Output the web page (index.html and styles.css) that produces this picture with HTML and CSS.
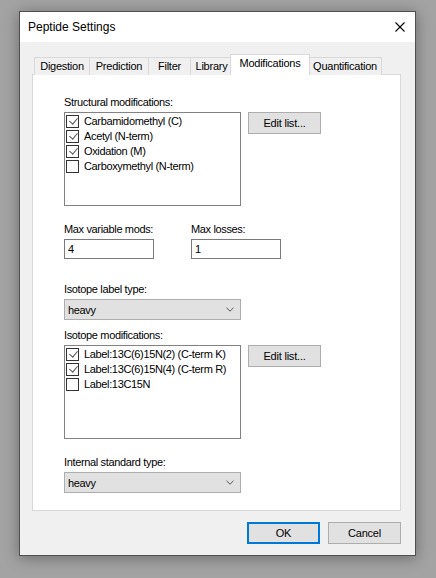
FILE: index.html
```html
<!DOCTYPE html>
<html>
<head>
<meta charset="utf-8">
<link rel="stylesheet" href="styles.css">
</head>
<body>
<div class="window">
  <div class="titlebar">
    <span class="title">Peptide Settings</span>
    <svg class="close" width="10" height="10" viewBox="0 0 10 10"><path d="M0.5 0.5 L9.5 9.5 M9.5 0.5 L0.5 9.5" stroke="#000" stroke-width="1.1" fill="none"/></svg>
  </div>
  <div class="client">
    <div class="tabs">
      <div class="tab w-dig">Digestion</div>
      <div class="tab w-pred">Prediction</div>
      <div class="tab w-filt">Filter</div>
      <div class="tab w-lib">Library</div>
      <div class="tab selected w-mod">Modifications</div>
      <div class="tab w-quant">Quantification</div>
    </div>
    <div class="panel">
      <div class="label first">Structural modifications:</div>
      <div class="row">
        <div class="listbox">
          <div class="item"><span class="cb checked"></span>Carbamidomethyl (C)</div>
          <div class="item"><span class="cb checked"></span>Acetyl (N-term)</div>
          <div class="item"><span class="cb checked"></span>Oxidation (M)</div>
          <div class="item"><span class="cb"></span>Carboxymethyl (N-term)</div>
        </div>
        <div class="button edit">Edit list...</div>
      </div>

      <div class="pair">
        <div class="col">
          <div class="label lp">Max variable mods:</div>
          <div class="textbox">4</div>
        </div>
        <div class="col">
          <div class="label lp">Max losses:</div>
          <div class="textbox">1</div>
        </div>
      </div>

      <div class="label l-iso">Isotope label type:</div>
      <div class="combo"><span>heavy</span><svg width="8" height="5" viewBox="0 0 8 5"><path d="M0.5 0.8 L4 4.2 L7.5 0.8" stroke="#555" stroke-width="1" fill="none"/></svg></div>

      <div class="label l-isomods">Isotope modifications:</div>
      <div class="row">
        <div class="listbox">
          <div class="item"><span class="cb checked"></span>Label:13C(6)15N(2) (C-term K)</div>
          <div class="item"><span class="cb checked"></span>Label:13C(6)15N(4) (C-term R)</div>
          <div class="item"><span class="cb"></span>Label:13C15N</div>
        </div>
        <div class="button edit">Edit list...</div>
      </div>

      <div class="label l-int">Internal standard type:</div>
      <div class="combo"><span>heavy</span><svg width="8" height="5" viewBox="0 0 8 5"><path d="M0.5 0.8 L4 4.2 L7.5 0.8" stroke="#555" stroke-width="1" fill="none"/></svg></div>
    </div>
    <div class="footer">
      <div class="button ok">OK</div>
      <div class="button">Cancel</div>
    </div>
  </div>
</div>
</body>
</html>
```

FILE: styles.css
```css
html, body {
  margin: 0;
  padding: 0;
}
body {
  background: #a3a3a3;
  width: 436px;
  height: 578px;
  overflow: hidden;
  font-family: "Liberation Sans", Arial, sans-serif;
  font-size: 11px;
  color: #000;
}
.window {
  margin: 11px 0 0 19px;
  width: 395px;
  height: 543px;
  border: 1px solid #505050;
  background: #f0f0f0;
  box-shadow: 0 2px 14px rgba(0, 0, 0, 0.35);
}
.titlebar {
  height: 30px;
  background: #fff;
  display: flex;
  align-items: center;
  justify-content: space-between;
  padding: 0 10px 0 8px;
}
.title {
  font-size: 12px;
}
.close {
  display: block;
}
.client {
  padding: 12px 0 0 12px;
}
.tabs {
  display: flex;
  align-items: flex-end;
  height: 21px;
  padding-left: 2px;
  position: relative;
  z-index: 1;
}
.tab {
  box-sizing: border-box;
  height: 18px;
  border: 1px solid #d9d9d9;
  border-bottom: none;
  background: #f0f0f0;
  margin-right: -1px;
  text-align: center;
  line-height: 16px;
  letter-spacing: -0.25px;
}
.tab.selected {
  height: 21px;
  background: #fff;
  margin-left: -2px;
  margin-right: -2px;
  position: relative;
  z-index: 2;
  line-height: 17px;
}
.w-dig { width: 56px; }
.w-pred { width: 60px; }
.w-filt { width: 43px; }
.w-lib { width: 43px; }
.w-mod { width: 80px; }
.w-quant { width: 74px; }
.panel {
  box-sizing: border-box;
  width: 369px;
  height: 437px;
  margin-top: -1px;
  border: 1px solid #d9d9d9;
  background: #fff;
  padding-left: 31px;
  letter-spacing: -0.35px;
}
.label {
  line-height: 13px;
  height: 13px;
  margin-bottom: 3px;
}
.label.first { margin-top: 21px; }
.row {
  display: flex;
  align-items: flex-start;
  gap: 7px;
}
.listbox {
  box-sizing: border-box;
  width: 177px;
  height: 94px;
  border: 1px solid #828282;
  padding-top: 1px;
}
.item {
  display: flex;
  align-items: center;
  height: 15px;
  line-height: 15px;
  white-space: nowrap;
}
.cb {
  box-sizing: border-box;
  width: 13px;
  height: 13px;
  border: 1px solid #333;
  margin: 0 5px 0 1px;
  flex: none;
  position: relative;
}
.cb.checked::after {
  content: "";
  position: absolute;
  left: 3.5px;
  top: 0px;
  width: 4px;
  height: 7px;
  border-right: 1.2px solid #555;
  border-bottom: 1.2px solid #555;
  transform: rotate(40deg);
}
.button {
  box-sizing: border-box;
  width: 73px;
  height: 22px;
  background: #e1e1e1;
  border: 1px solid #adadad;
  text-align: center;
  line-height: 20px;
  letter-spacing: -0.2px;
}
.pair {
  display: flex;
  margin-top: 17px;
}
.lp { margin-bottom: 3px; }
.col { width: 127px; }
.textbox {
  box-sizing: border-box;
  width: 90px;
  height: 20px;
  border: 1px solid #7a7a7a;
  background: #fff;
  line-height: 18px;
  padding-left: 3px;
}
.l-iso { margin-top: 24px; }
.combo {
  box-sizing: border-box;
  width: 177px;
  height: 21px;
  background: #e1e1e1;
  border: 1px solid #adadad;
  display: flex;
  align-items: center;
  justify-content: space-between;
  padding: 0 6px 0 3px;
}
.combo svg { display: block; }
.l-isomods { margin-top: 9px; }
.l-int { margin-top: 17px; }
.footer {
  display: flex;
  justify-content: flex-end;
  gap: 8px;
  width: 369px;
  margin-top: 11px;
}
.button.ok {
  border: 2px solid #0078d7;
  line-height: 18px;
}
```
